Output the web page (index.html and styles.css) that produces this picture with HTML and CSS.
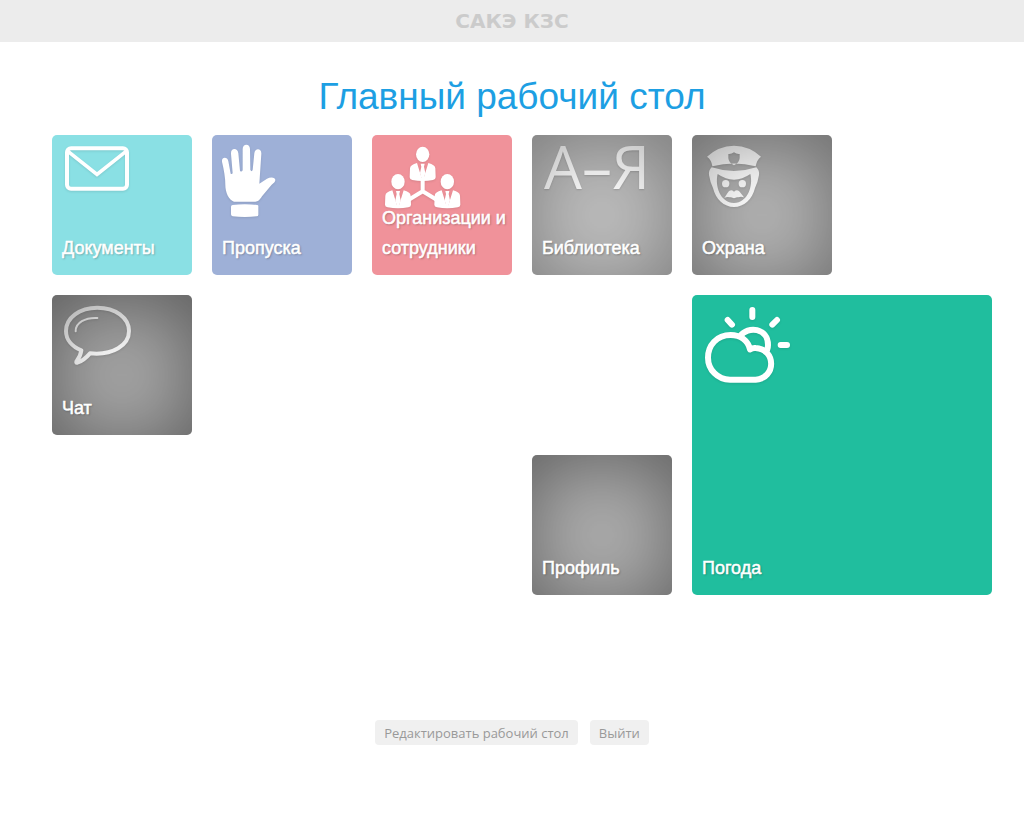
FILE: index.html
```html
<!DOCTYPE html>
<html lang="ru">
<head>
<meta charset="utf-8">
<meta name="viewport" content="width=device-width, initial-scale=1">
<title>Главный рабочий стол</title>
<link rel="stylesheet" href="styles.css">
</head>
<body>
<header class="topbar">САКЭ КЗС</header>
<main class="desktop">
  <h1 class="title">Главный рабочий стол</h1>
  <nav class="tiles">
    <a class="tile tile-documents" href="#documents">
      <svg class="icon" viewBox="12 15 300 270" aria-hidden="true">
        <rect x="57" y="55" width="180" height="121" rx="12" fill="none" stroke="#fff" stroke-width="12"/>
        <path d="M60 64 147 133 234 64" fill="none" stroke="#fff" stroke-width="11"/>
      </svg>
      <span class="label">Документы</span>
    </a>
    <a class="tile tile-passes" href="#passes">
      <svg class="icon" viewBox="12 15 300 270" aria-hidden="true">
        <path fill="#fff" d="M42 95C40 80 59 80 61 94L68 131Q71 134 74 130L69 71C68 53 89 53 91 70L96 122Q100 128 104 121L104 57C104 40 126 40 126 57L127 120Q131 127 134 120L139 70C141 53 161 55 160 71L154 161L177 146C187 140 202 141 202 150C202 156 197 159 191 164L162 199C154 211 150 215 142 215L78 215C63 210 52 188 52 164Q52 136 42 95Z"/>
        <path fill="#fff" d="M74 225Q110 220 147 225Q152 225 151 230L151 254Q151 259 146 259Q110 263 74 259Q69 258 69 253L69 230Q69 226 74 225Z"/>
      </svg>
      <span class="label">Пропуска</span>
    </a>
    <a class="tile tile-staff" href="#staff">
      <svg class="icon" viewBox="12 15 300 270" aria-hidden="true">
        <defs>
          <g id="person" fill="#fff">
            <ellipse cx="0" cy="22" rx="20" ry="23"/>
            <path d="M-17 48-3 93H3L17 48Q37 53 38 64L39 91Q39 97 31 99Q0 105-31 99Q-39 97-39 91L-38 64Q-37 53-17 48Z"/>
            <path d="M-6 50H6L4 59 8 78 3 96H-3L-8 78-4 59Z"/>
          </g>
        </defs>
        <path d="M164 145V184L116 213M164 184 212 213" fill="none" stroke="#fff" stroke-width="12"/>
        <use href="#person" x="164" y="51"/>
        <use href="#person" x="90" y="133"/>
        <use href="#person" x="238" y="133"/>
      </svg>
      <span class="label">Организации и сотрудники</span>
    </a>
    <a class="tile tile-library tile-shaded" href="#library">
      <span class="letters" aria-hidden="true">А–Я</span>
      <span class="label">Библиотека</span>
    </a>
    <a class="tile tile-security tile-shaded" href="#security">
      <svg class="icon" viewBox="12 15 300 270" aria-hidden="true">
        <path fill="#fff" fill-rule="evenodd" d="M57 80Q91 48 138 47Q185 48 219 80Q206 90 203 109Q138 92 73 109Q71 90 57 80ZM121 72V84Q122 98 138 106Q154 98 155 84V72Q146 73 138 67Q130 73 121 72Z"/>
        <path fill="#fff" fill-rule="evenodd" d="M71 112Q138 134 205 112Q215 122 213 135Q210 155 201 174C193 208 168 231 138 231C108 231 83 208 75 174Q66 155 63 135Q61 122 71 112ZM89 132C80 169 97 218 138 219C179 218 196 169 187 132Q138 166 89 132Z"/>
        <circle cx="113" cy="161" r="11" fill="#fff"/>
        <circle cx="163" cy="161" r="11" fill="#fff"/>
        <path fill="#fff" d="M138 185Q150 175 158 189L168 202Q159 199 151 202H147L138 205 129 202H125Q117 199 109 204L118 190Q126 175 138 185Z"/>
      </svg>
      <span class="label">Охрана</span>
    </a>
    <a class="tile tile-chat tile-shaded" href="#chat">
      <svg class="icon" viewBox="12 15 300 270" aria-hidden="true">
        <path d="M100 181C72 170 54 149 54 123C54 83 95 53 148 53C202 53 243 83 243 123C243 165 195 197 126 190Q107 212 88 218Q83 219 86 213Q97 200 100 181Z" fill="none" stroke="#fff" stroke-width="12" stroke-linejoin="round"/>
        <path d="M83 124C82 98 112 82 148 84" fill="none" stroke="#fff" stroke-width="6" stroke-linecap="round"/>
      </svg>
      <span class="label">Чат</span>
    </a>
    <a class="tile tile-profile tile-shaded" href="#profile">
      <span class="label">Профиль</span>
    </a>
    <a class="tile tile-weather" href="#weather">
      <svg class="icon" viewBox="12 15 300 270" aria-hidden="true">
        <g fill="none" stroke="#fff" stroke-width="18" stroke-linecap="round" stroke-linejoin="round">
          <path d="M193 60V81M119 90 132 104M267 90 253 104M278 165H297"/>
          <path d="M156 139C180 106 240 114 240 165Q240 174 237 181" stroke-linecap="butt"/>
          <path d="M126 269H203C265 265 265 178 203 174Q194 173 186 178C180 152 158 135 128 135C86 135 60 166 60 203C60 239 89 269 126 269Z"/>
        </g>
      </svg>
      <span class="label">Погода</span>
    </a>
  </nav>
</main>
<footer class="actions">
  <button class="action" type="button">Редактировать рабочий стол</button>
  <button class="action" type="button">Выйти</button>
</footer>
</body>
</html>
```
FILE: styles.css
```css
* {
  box-sizing: border-box;
}

body {
  margin: 0;
  background: #fff;
  font-family: "Liberation Sans", Arial, sans-serif;
}

.topbar {
  padding: 10px;
  background: #ececec;
  color: #cbcbcb;
  font: bold 20px/22px "DejaVu Sans", sans-serif;
  text-align: center;
}

.desktop {
  max-width: 960px;
  margin: 0 auto;
  padding-top: 32px;
}

.title {
  margin: 0;
  color: #1d9fe3;
  font-size: 37px;
  font-weight: normal;
  line-height: 46px;
  text-align: center;
}

.tiles {
  display: grid;
  grid-template-columns: repeat(auto-fill, 140px);
  grid-auto-rows: 140px;
  gap: 20px;
  padding: 15px 0 0 20px;
}

.tile {
  position: relative;
  border-radius: 5px;
  color: #fff;
  text-decoration: none;
}

.icon {
  display: block;
  width: 100px;
  height: 90px;
  filter: drop-shadow(0 1px 1px rgba(0, 0, 0, 0.1));
}

.letters {
  display: block;
  padding-left: 12px;
  font: 60px/62px "Open Sans", sans-serif;
  text-shadow: 0 1px 2px rgba(0, 0, 0, 0.15);
}

.label {
  position: absolute;
  z-index: 1;
  right: 0;
  bottom: 12px;
  left: 10px;
  font-size: 18px;
  line-height: 30px;
  text-shadow: 1px 1px 2px rgba(0, 0, 0, 0.3);
  -webkit-text-stroke: 0.5px #fff;
}

.tile-shaded::after {
  content: "";
  position: absolute;
  inset: 0;
  border-radius: inherit;
  box-shadow: inset 0 10px 75px rgba(0, 0, 0, var(--shade));
}

.tile-documents { background: #8ae0e4; }
.tile-passes { background: #9eb0d7; }
.tile-staff { background: #f0929a; }
.tile-library { background: #bcbcbc; --shade: 0.34; }
.tile-security { background: #b2b2b2; --shade: 0.4; }
.tile-chat { background: #a4a4a4; --shade: 0.44; }
.tile-profile { grid-area: 3 / 4; background: #acacac; --shade: 0.43; }
.tile-chat { grid-area: 2 / 1; }
.tile-weather { grid-area: 2 / 5 / span 2 / span 2; background: #20be9e; }

.actions {
  display: flex;
  flex-wrap: wrap;
  justify-content: center;
  gap: 12px;
  padding: 125px 10px 20px;
}

.action {
  padding: 1px 9px 0;
  border: 0;
  border-radius: 4px;
  background: #f0f0f0;
  color: #999;
  font: 13px/24px "Open Sans", sans-serif;
}
```
